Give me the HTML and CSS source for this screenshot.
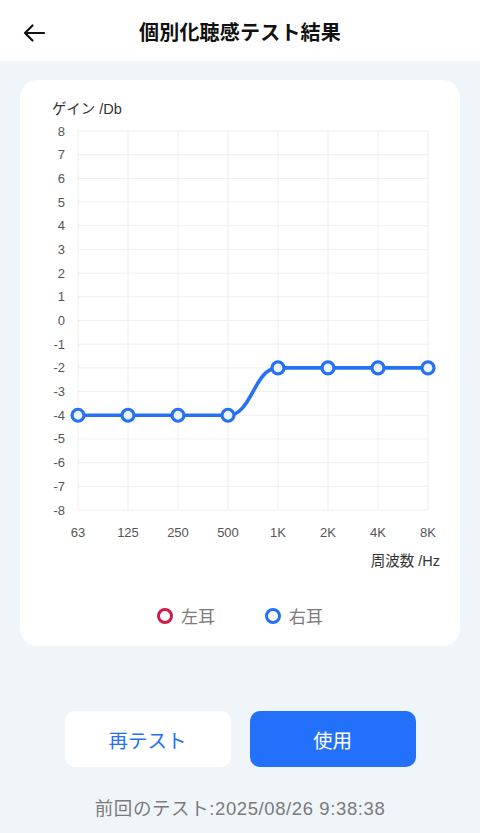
FILE: index.html
```html
<!DOCTYPE html>
<html lang="ja">
<head>
<meta charset="utf-8">
<title>個別化聴感テスト結果</title>
<link rel="stylesheet" href="styles.css">
</head>
<body>
<header class="header">
  <svg class="back" width="24" height="20" viewBox="0 0 24 20">
    <path d="M22 10H3M10.5 2.5L3 10l7.5 7.5" fill="none" stroke="#111" stroke-width="2.2" stroke-linecap="round" stroke-linejoin="round"/>
  </svg>
  <h1 class="title">個別化聴感テスト結果</h1>
</header>
<main class="main">
  <section class="card">
    <svg class="chart" width="440" height="500" viewBox="0 0 440 500">
      <g class="grid" stroke="#eeeeee" stroke-width="1">
        <line x1="58" y1="51" x2="408" y2="51"/>
        <line x1="58" y1="74.69" x2="408" y2="74.69"/>
        <line x1="58" y1="98.38" x2="408" y2="98.38"/>
        <line x1="58" y1="122.06" x2="408" y2="122.06"/>
        <line x1="58" y1="145.75" x2="408" y2="145.75"/>
        <line x1="58" y1="169.44" x2="408" y2="169.44"/>
        <line x1="58" y1="193.13" x2="408" y2="193.13"/>
        <line x1="58" y1="216.81" x2="408" y2="216.81"/>
        <line x1="58" y1="240.5" x2="408" y2="240.5"/>
        <line x1="58" y1="264.19" x2="408" y2="264.19"/>
        <line x1="58" y1="287.88" x2="408" y2="287.88"/>
        <line x1="58" y1="311.56" x2="408" y2="311.56"/>
        <line x1="58" y1="335.25" x2="408" y2="335.25"/>
        <line x1="58" y1="358.94" x2="408" y2="358.94"/>
        <line x1="58" y1="382.63" x2="408" y2="382.63"/>
        <line x1="58" y1="406.31" x2="408" y2="406.31"/>
        <line x1="58" y1="430" x2="408" y2="430"/>
        <line x1="58" y1="51" x2="58" y2="430"/>
        <line x1="108" y1="51" x2="108" y2="430"/>
        <line x1="158" y1="51" x2="158" y2="430"/>
        <line x1="208" y1="51" x2="208" y2="430"/>
        <line x1="258" y1="51" x2="258" y2="430"/>
        <line x1="308" y1="51" x2="308" y2="430"/>
        <line x1="358" y1="51" x2="358" y2="430"/>
        <line x1="408" y1="51" x2="408" y2="430"/>
      </g>
      <text class="axis-title" x="32" y="34">ゲイン /Db</text>
      <g class="ylab" text-anchor="end">
        <text x="45" y="55.5">8</text>
        <text x="45" y="79.2">7</text>
        <text x="45" y="102.9">6</text>
        <text x="45" y="126.6">5</text>
        <text x="45" y="150.3">4</text>
        <text x="45" y="173.9">3</text>
        <text x="45" y="197.6">2</text>
        <text x="45" y="221.3">1</text>
        <text x="45" y="245">0</text>
        <text x="45" y="268.7">-1</text>
        <text x="45" y="292.4">-2</text>
        <text x="45" y="316.1">-3</text>
        <text x="45" y="339.8">-4</text>
        <text x="45" y="363.4">-5</text>
        <text x="45" y="387.1">-6</text>
        <text x="45" y="410.8">-7</text>
        <text x="45" y="434.5">-8</text>
      </g>
      <g class="xlab" text-anchor="middle">
        <text x="58" y="456.5">63</text>
        <text x="108" y="456.5">125</text>
        <text x="158" y="456.5">250</text>
        <text x="208" y="456.5">500</text>
        <text x="258" y="456.5">1K</text>
        <text x="308" y="456.5">2K</text>
        <text x="358" y="456.5">4K</text>
        <text x="408" y="456.5">8K</text>
      </g>
      <text class="axis-title" x="420" y="486" text-anchor="end">周波数 /Hz</text>
      <path d="M58 335.25H208C232 335.25 234 287.88 258 287.88H408" fill="none" stroke="#2670f6" stroke-width="3.6" stroke-linejoin="round"/>
      <g fill="#eef4fb" stroke="#2670f6" stroke-width="3.2">
        <circle cx="58" cy="335.25" r="6"/>
        <circle cx="108" cy="335.25" r="6"/>
        <circle cx="158" cy="335.25" r="6"/>
        <circle cx="208" cy="335.25" r="6"/>
        <circle cx="258" cy="287.88" r="6"/>
        <circle cx="308" cy="287.88" r="6"/>
        <circle cx="358" cy="287.88" r="6"/>
        <circle cx="408" cy="287.88" r="6"/>
      </g>
    </svg>
    <div class="legend">
      <div class="legend-item"><span class="dot dot-left"></span><span>左耳</span></div>
      <div class="legend-item"><span class="dot dot-right"></span><span>右耳</span></div>
    </div>
  </section>
  <div class="actions">
    <button class="btn btn-outline">再テスト</button>
    <button class="btn btn-primary">使用</button>
  </div>
  <p class="last">前回のテスト:2025/08/26 9:38:38</p>
</main>
</body>
</html>
```

FILE: styles.css
```css
* { box-sizing: border-box; }
html, body {
  margin: 0;
  padding: 0;
  background: #f0f5fa;
  font-family: "Liberation Sans", "Noto Sans CJK JP", sans-serif;
  width: 480px;
  height: 833px;
  overflow: hidden;
}
.header {
  height: 61px;
  background: #ffffff;
  display: flex;
  align-items: center;
  justify-content: center;
  position: relative;
}
.back {
  position: absolute;
  left: 22px;
  top: 23px;
}
.title {
  margin: 0;
  font-family: "Noto Sans CJK JP", sans-serif;
  font-size: 20px;
  font-weight: 700;
  color: #111111;
  letter-spacing: 0.2px;
  line-height: 1;
  padding-top: 2px;
}
.main {
  display: flex;
  flex-direction: column;
  align-items: center;
  padding-top: 19px;
}
.card {
  width: 440px;
  height: 566px;
  background: #ffffff;
  border-radius: 18px;
  display: flex;
  flex-direction: column;
}
.chart {
  display: block;
  font-family: "Liberation Sans", "Noto Sans CJK JP", sans-serif;
}
.ylab text, .xlab text {
  font-size: 13px;
  fill: #555555;
}
.axis-title {
  font-family: "Liberation Sans", "Noto Sans CJK JP", sans-serif;
  font-size: 14.5px;
  fill: #333333;
}
.legend {
  margin-top: 26px;
  height: 20px;
  display: flex;
  justify-content: center;
  gap: 50px;
}
.legend-item {
  display: flex;
  align-items: center;
  gap: 8px;
  font-family: "Noto Sans CJK JP", sans-serif;
  font-size: 17px;
  color: #7a7a7a;
  line-height: 20px;
}
.dot {
  width: 16px;
  height: 16px;
  border-radius: 50%;
  border: 3px solid #d31a48;
  background: #ffffff;
}
.dot-right { border-color: #2670f6; }
.actions {
  margin-top: 65px;
  display: flex;
  gap: 19px;
}
.btn {
  width: 166px;
  height: 56px;
  border-radius: 10px;
  border: none;
  font-family: "Noto Sans CJK JP", sans-serif;
  font-size: 19.5px;
  padding: 0;
}
.btn-outline {
  background: #ffffff;
  color: #2670f6;
}
.btn-primary {
  background: #2371fb;
  color: #ffffff;
}
.last {
  margin: 30px 0 0;
  font-family: "Liberation Sans", "Noto Sans CJK JP", sans-serif;
  font-size: 18.5px;
  letter-spacing: 0.6px;
  color: #7a7a7a;
  line-height: 24px;
}
```
